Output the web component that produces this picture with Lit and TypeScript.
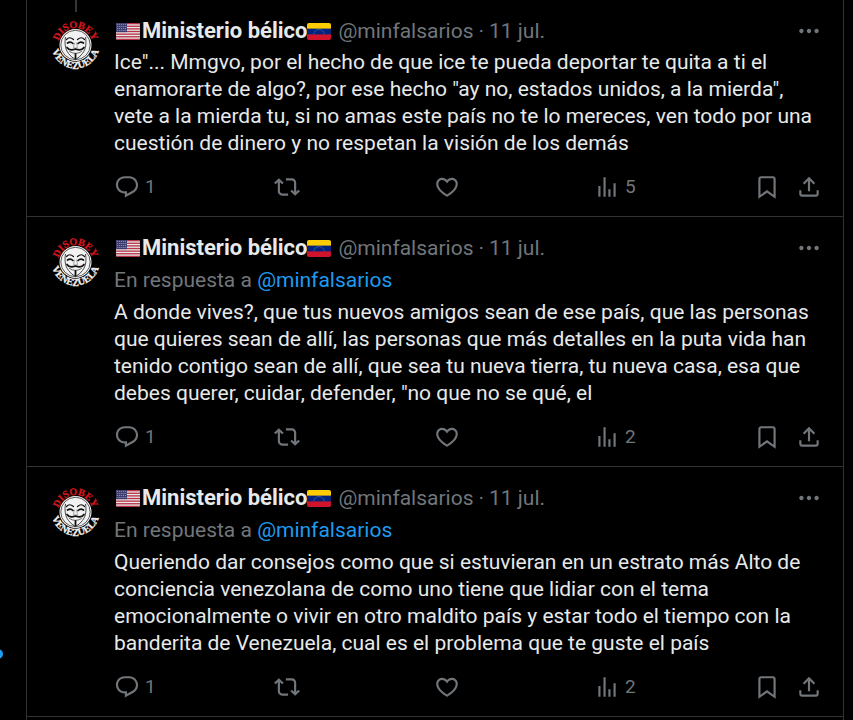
import { LitElement, html, svg, css, nothing } from "lit";
import { customElement, property } from "lit/decorators.js";

interface Post {
  threaded?: boolean;
  replyTo?: string;
  text: string;
  replies: number;
  views: number;
}

const posts: Post[] = [
  {
    threaded: true,
    text: 'Ice"... Mmgvo, por el hecho de que ice te pueda deportar te quita a ti el enamorarte de algo?, por ese hecho "ay no, estados unidos, a la mierda", vete a la mierda tu, si no amas este país no te lo mereces, ven todo por una cuestión de dinero y no respetan la visión de los demás',
    replies: 1,
    views: 5,
  },
  {
    replyTo: "@minfalsarios",
    text: 'A donde vives?, que tus nuevos amigos sean de ese país, que las personas que quieres sean de allí, las personas que más detalles en la puta vida han tenido contigo sean de allí, que sea tu nueva tierra, tu nueva casa, esa que debes querer, cuidar, defender, "no que no se qué, el',
    replies: 1,
    views: 2,
  },
  {
    replyTo: "@minfalsarios",
    text: "Queriendo dar consejos como que si estuvieran en un estrato más Alto de conciencia venezolana de como uno tiene que lidiar con el tema emocionalmente o vivir en otro maldito país y estar todo el tiempo con la banderita de Venezuela, cual es el problema que te guste el país",
    replies: 1,
    views: 2,
  },
];

const icons = {
  reply:
    "M1.751 10c0-4.42 3.584-8 8.005-8h4.366c4.49 0 8.129 3.64 8.129 8.13 0 2.96-1.607 5.68-4.196 7.11l-8.054 4.46v-3.69h-.067c-4.49.1-8.183-3.51-8.183-8.01zm8.005-6c-3.317 0-6.005 2.69-6.005 6 0 3.37 2.77 6.08 6.138 6.01l.351-.01h1.761v2.3l5.087-2.81c1.951-1.08 3.163-3.13 3.163-5.36 0-3.39-2.744-6.13-6.129-6.13H9.756z",
  repost:
    "M4.5 3.88l4.432 4.14-1.364 1.46L5.5 7.55V16c0 1.1.896 2 2 2H13v2H7.5c-2.209 0-4-1.79-4-4V7.55L1.432 9.48.068 8.02 4.5 3.88zM16.5 6H11V4h5.5c2.209 0 4 1.79 4 4v8.45l2.068-1.93 1.364 1.46-4.432 4.14-4.432-4.14 1.364-1.46 2.068 1.93V8c0-1.1-.896-2-2-2z",
  like:
    "M16.697 5.5c-1.222-.06-2.679.51-3.89 2.16l-.805 1.09-.806-1.09C9.984 6.01 8.526 5.44 7.304 5.5c-1.243.07-2.349.78-2.91 1.91-.552 1.12-.633 2.78.479 4.82 1.074 1.97 3.257 4.27 7.129 6.61 3.87-2.34 6.052-4.64 7.126-6.61 1.111-2.04 1.03-3.7.477-4.82-.561-1.13-1.666-1.84-2.908-1.91zm4.187 7.69c-1.351 2.48-4.001 5.12-8.379 7.67l-.503.3-.504-.3c-4.379-2.55-7.029-5.19-8.382-7.67-1.36-2.5-1.41-4.86-.514-6.67.887-1.79 2.647-2.91 4.601-3.01 1.651-.09 3.368.56 4.798 2.01 1.429-1.45 3.146-2.1 4.796-2.01 1.954.1 3.714 1.22 4.601 3.01.896 1.81.846 4.17-.514 6.67z",
  views: "M8.75 21V3h2v18h-2zM18 21V8.5h2V21h-2zM4 21l.004-10h2L6 21H4zm9.248 0v-7h2v7h-2z",
  bookmark:
    "M4 4.5C4 3.12 5.119 2 6.5 2h11C18.881 2 20 3.12 20 4.5v18.44l-8-5.71-8 5.71V4.5zM6.5 4c-.276 0-.5.22-.5.5v14.56l6-4.29 6 4.29V4.5c0-.28-.224-.5-.5-.5h-11z",
  share:
    "M12 2.59l5.7 5.7-1.41 1.42L13 6.41V16h-2V6.41l-3.3 3.3-1.41-1.42L12 2.59zM21 15l-.02 3.51c0 1.38-1.12 2.49-2.5 2.49H5.5C4.11 21 3 19.88 3 18.5V15h2v3.5c0 .28.22.5.5.5h12.98c.28 0 .5-.22.5-.5L19 15h2z",
  more:
    "M3 12c0-1.1.9-2 2-2s2 .9 2 2-.9 2-2 2-2-.9-2-2zm9 2c1.1 0 2-.9 2-2s-.9-2-2-2-2 .9-2 2 .9 2 2 2zm7 0c1.1 0 2-.9 2-2s-.9-2-2-2-2 .9-2 2 .9 2 2 2z",
};

const icon = (name: keyof typeof icons) =>
  html`<svg class="icon" viewBox="0 0 24 24" aria-hidden="true"><path d=${icons[name]}></path></svg>`;

const usFlag = html`<svg class="flag" viewBox="0 0 24 17" role="img" aria-label="Estados Unidos">
  <clipPath id="us"><rect width="24" height="17" rx="2"></rect></clipPath>
  <g clip-path="url(#us)">
    <rect width="24" height="17" fill="#e8e8e8"></rect>
    ${[0, 1, 2, 3, 4, 5, 6].map((i) => svg`<rect y=${i * 2.62} width="24" height="1.31" fill="#b83246"></rect>`)}
    <rect width="11" height="9.15" fill="#3c3b6e"></rect>
    ${[0, 1, 2, 3].map((r) =>
      [0, 1, 2, 3, 4].map(
        (c) => svg`<circle cx=${1.3 + c * 2 + (r % 2) * 0.6} cy=${1.3 + r * 2.1} r="0.5" fill="#b9b9d4"></circle>`
      )
    )}
  </g>
</svg>`;

const veFlag = html`<svg class="flag" viewBox="0 0 24 17" role="img" aria-label="Venezuela">
  <clipPath id="ve"><rect width="24" height="17" rx="2"></rect></clipPath>
  <g clip-path="url(#ve)">
    <rect width="24" height="17" fill="#00247d"></rect>
    <rect width="24" height="5.6" fill="#fc0"></rect>
    <rect y="11.4" width="24" height="5.6" fill="#cf142b"></rect>
    <path d="M7 11a5 4.4 0 0 1 10 0" fill="none" stroke="#5b70ab" stroke-width="1" stroke-dasharray="1.2 .7"></path>
  </g>
</svg>`;

const avatar = html`<svg class="avatar" viewBox="0 0 54 54" role="img" aria-label="Disobey Venezuela">
  <defs>
    <path id="upper" d="M9.500 27a17 17 0 0 1 34 0"></path>
    <path id="lower" d="M2.500 26.500a24 24 0 0 0 48 0"></path>
  </defs>
  <text class="ring red"><textPath href="#upper" startOffset="50%">DISOBEY</textPath></text>
  <text class="ring"><textPath href="#lower" startOffset="50%">VENEZUELA</textPath></text>
  <g transform="translate(-.5 0)">
    <circle cx="27" cy="27" r="16" fill="#f2f2f2"></circle>
    <circle cx="27" cy="27" r="14.700" fill="none" stroke="#333" stroke-width=".8"></circle>
    <path d="M17 19c-1 6-.5 12 3 16.500q3 4 7 6q4-2 7-6c3.500-4.500 4-10.500 3-16.500" fill="none" stroke="#333" stroke-width=".9"></path>
    <g fill="none" stroke="#111" stroke-linecap="round">
      <path d="M18 21.500q3-3.500 7 0M36 21.500q-3-3.500-7 0" stroke-width="1.200"></path>
      <path d="M19 25q3-2 5.500.5M35 25q-3-2-5.500.5" stroke-width="1.700"></path>
      <path d="M26 25l-1 4.500q2 1.200 4 0l-1-4.500" stroke="#888" stroke-width=".7"></path>
      <path d="M18.500 29.500q2.500 3.800 8.500 1.500q6 2.300 8.500-1.500" stroke-width="1.700"></path>
      <path d="M21 33.500q6 4 12 0" stroke="#555" stroke-width=".9"></path>
      <path d="M27 36v4.500" stroke-width="1.800"></path>
    </g>
  </g>
</svg>`;

@customElement("post-item")
export class PostItem extends LitElement {
  @property({ attribute: false }) post!: Post;

  static styles = css`
    :host {
      display: block;
      border-bottom: 1px solid #2f3336;
      color: #e7e9ea;
    }
    article {
      display: flex;
      gap: 11px;
      padding: 0 21px 16px 22px;
    }
    .side {
      display: flex;
      flex: none;
      flex-direction: column;
      align-items: center;
      gap: 6px;
      width: 54px;
    }
    .thread {
      width: 2px;
      height: 12px;
    }
    .thread.on {
      background: #333639;
    }
    .avatar {
      display: block;
      width: 54px;
      height: 54px;
    }
    .ring {
      font: 700 10px "Liberation Serif", serif;
      text-anchor: middle;
      fill: #f2f2f2;
      stroke: #f2f2f2;
      stroke-width: 0.3px;
    }
    .red {
      fill: #d2161c;
      stroke: #d2161c;
    }
    .main {
      flex: 1;
      min-width: 0;
      padding-top: 17px;
    }
    header {
      display: flex;
      align-items: center;
      height: 28px;
      margin-bottom: 4px;
      color: #71767b;
      white-space: nowrap;
    }
    a {
      color: inherit;
      text-decoration: none;
    }
    .name {
      display: flex;
      align-items: center;
      margin-right: 5px;
      color: #e7e9ea;
      font-size: 22px;
      font-weight: 700;
    }
    .flag {
      width: 24px;
      height: 17px;
      margin-left: 2px;
    }
    .name span {
      margin-left: 2px;
    }
    .name span + .flag {
      margin: 0 2px 0 0;
    }
    .dot {
      margin: 0 5px;
    }
    .reply-to {
      margin: 0 0 5px;
      color: #71767b;
      line-height: 28px;
    }
    .reply-to a {
      color: #1d9bf0;
    }
    .text {
      margin: 0 0 17px;
      line-height: 27px;
    }
    .actions {
      display: flex;
    }
    .slot {
      flex: 1;
    }
    .save {
      margin-right: 16px;
    }
    button {
      display: flex;
      align-items: center;
      gap: 5px;
      padding: 0;
      border: 0;
      background: none;
      color: #71767b;
      font: inherit;
      font-size: 19px;
      line-height: 26px;
      cursor: pointer;
    }
    .more {
      margin-left: auto;
    }
    .icon {
      display: block;
      width: 26px;
      height: 26px;
      fill: currentColor;
    }
  `;

  render() {
    const p = this.post;
    return html`<article>
      <div class="side">
        <div class="thread ${p.threaded ? "on" : ""}"></div>
        ${avatar}
      </div>
      <div class="main">
        <header>
          <a class="name" href="#perfil">${usFlag}<span>Ministerio bélico</span>${veFlag}</a>
          <a href="#perfil">@minfalsarios</a>
          <span class="dot">·</span>
          <a href="#post"><time>11 jul.</time></a>
          <button class="more" aria-label="Más opciones">${icon("more")}</button>
        </header>
        ${p.replyTo ? html`<p class="reply-to">En respuesta a <a href="#perfil">${p.replyTo}</a></p>` : nothing}
        <p class="text">${p.text}</p>
        <div class="actions">
          <div class="slot"><button aria-label="Responder">${icon("reply")}<span>${p.replies}</span></button></div>
          <div class="slot"><button aria-label="Repostear">${icon("repost")}</button></div>
          <div class="slot"><button aria-label="Me gusta">${icon("like")}</button></div>
          <div class="slot"><button aria-label="Ver estadísticas">${icon("views")}<span>${p.views}</span></button></div>
          <button class="save" aria-label="Guardar">${icon("bookmark")}</button>
          <button aria-label="Compartir">${icon("share")}</button>
        </div>
      </div>
    </article>`;
  }
}

@customElement("app-root")
export class AppRoot extends LitElement {
  static styles = css`
    :host {
      display: flex;
      min-height: 100vh;
      overflow: hidden;
      background: #000;
      font: 21px/28px Roboto, "Liberation Sans", sans-serif;
    }
    nav {
      position: relative;
      flex: none;
      width: 26px;
    }
    .badge {
      position: absolute;
      top: 649px;
      left: -7px;
      width: 10px;
      height: 10px;
      border-radius: 50%;
      background: #1d9bf0;
    }
    main {
      flex: 1;
      min-width: 0;
      margin-right: 9px;
      border: solid #2f3336;
      border-width: 0 1px;
    }
  `;

  render() {
    return html`
      <nav aria-label="Principal"><span class="badge"></span></nav>
      <main>${posts.map((p) => html`<post-item .post=${p}></post-item>`)}</main>
    `;
  }
}
